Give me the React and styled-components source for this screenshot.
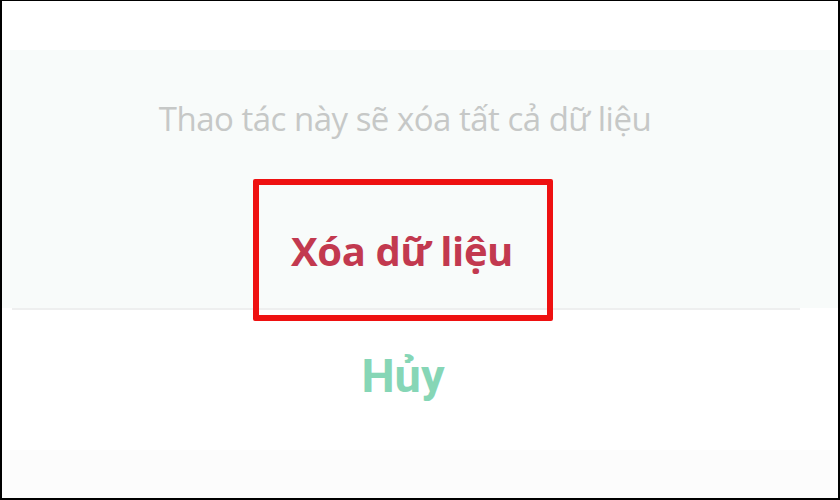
import React from "react";
import styled, { createGlobalStyle } from "styled-components";

const Global = createGlobalStyle`
  html, body { margin: 0; padding: 0; background: #000; }
  body { font-family: "Open Sans", "Noto Sans", sans-serif; }
`;

const Frame = styled.div`
  position: relative;
  box-sizing: border-box;
  width: 840px;
  height: 500px;
  border-style: solid;
  border-color: #000;
  border-width: 1px 2px 2px 2px;
  background: #ffffff;
  display: flex;
  flex-direction: column;
  overflow: hidden;
`;

const TopBand = styled.div`
  height: 49px;
  background: #ffffff;
  flex: none;
`;

const Sheet = styled.div`
  height: 258px;
  background: #f8fbfa;
  display: flex;
  flex-direction: column;
  flex: none;
`;

const Message = styled.div`
  height: 136px;
  display: flex;
  align-items: center;
  justify-content: center;
  padding-right: 30px;
  font-family: "Open Sans", sans-serif;
  font-size: 33px;
  letter-spacing: -0.5px;
  color: #c6c8c7;
`;

const ActionRow = styled.div`
  flex: 1;
  display: flex;
  align-items: center;
  justify-content: center;
  font-family: ${(p) => p.$font || "'Open Sans', sans-serif"};
  font-weight: 700;
  font-size: ${(p) => p.$size}px;
  color: ${(p) => p.$color};
  letter-spacing: ${(p) => p.$spacing || 0}px;
  padding-top: ${(p) => p.$pt || 0}px;
  padding-bottom: ${(p) => p.$pb || 0}px;
  padding-right: ${(p) => p.$pr || 0}px;
`;

const Divider = styled.div`
  height: 2px;
  margin: 0 38px 0 10px;
  background: #eeefef;
  flex: none;
`;

const CancelArea = styled.div`
  height: 140px;
  display: flex;
  flex-direction: column;
  flex: none;
`;

const Footer = styled.div`
  flex: 1;
  background: #fcfcfc;
`;

const Highlight = styled.div`
  position: absolute;
  left: 251px;
  top: 178px;
  width: 300px;
  height: 142px;
  box-sizing: border-box;
  border: 6px solid #ee1111;
  border-radius: 2px;
  pointer-events: none;
`;

export default function App() {
  return (
    <>
      <Global />
      <Frame>
        <TopBand />
        <Sheet>
          <Message>Thao tác này sẽ xóa tất cả dữ liệu</Message>
          <ActionRow $size={40} $color="#c2394f" $spacing={-0.4} $pt={6} $pr={36}>
            Xóa dữ liệu
          </ActionRow>
        </Sheet>
        <Divider />
        <CancelArea>
          <ActionRow $size={47} $color="#86d6b6" $font="Roboto, sans-serif" $pb={10} $pr={34}>
            Hủy
          </ActionRow>
        </CancelArea>
        <Footer />
        <Highlight />
      </Frame>
    </>
  );
}
